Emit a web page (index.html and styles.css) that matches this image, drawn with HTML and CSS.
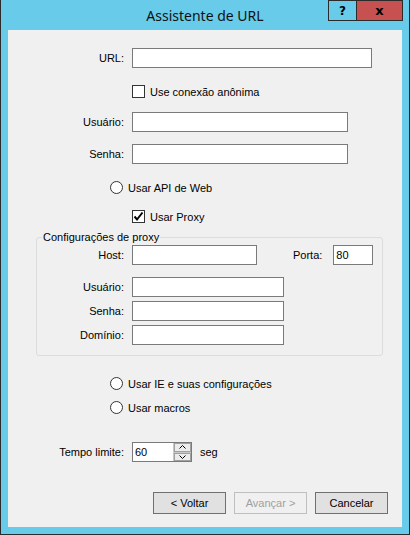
FILE: index.html
```html
<!DOCTYPE html>
<html lang="pt-BR">
<head>
  <meta charset="UTF-8" />
  <title>Assistente de URL</title>
  <link rel="stylesheet" href="styles.css">
</head>
<body>
  <div class="window">
    <div class="titlebar">
      <span></span>
      <span class="title">Assistente de URL</span>
      <div class="caption-btns">
        <span class="cap-btn help">?</span>
        <span class="cap-btn close">x</span>
      </div>
    </div>

    <div class="client">
      <div class="row row-url">
        <label class="lbl">URL:</label>
        <input type="text" class="txt w-url" />
      </div>

      <div class="opt row-anon">
        <span class="chk"></span>
        <span>Use conexão anônima</span>
      </div>

      <div class="row row-user">
        <label class="lbl">Usuário:</label>
        <input type="text" class="txt w-user" />
      </div>

      <div class="row row-pass">
        <label class="lbl">Senha:</label>
        <input type="text" class="txt w-user" />
      </div>

      <div class="opt radio-opt row-api">
        <span class="radio"></span>
        <span>Usar API de Web</span>
      </div>

      <div class="opt row-proxy">
        <span class="chk">
          <svg width="11" height="11" viewBox="0 0 11 11"><path d="M1.5 5.5 L4 8.5 L9.5 1.5" fill="none" stroke="#000" stroke-width="2"/></svg>
        </span>
        <span>Usar Proxy</span>
      </div>

      <fieldset class="group">
        <legend>Configurações de proxy</legend>

        <div class="row row-host">
          <label class="lbl lbl-in">Host:</label>
          <input type="text" class="txt w-host" />
          <label class="porta-lbl">Porta:</label>
          <input type="text" class="txt w-port" value="80" />
        </div>

        <div class="row row-puser">
          <label class="lbl lbl-in">Usuário:</label>
          <input type="text" class="txt w-puser" />
        </div>

        <div class="row row-tight">
          <label class="lbl lbl-in">Senha:</label>
          <input type="text" class="txt w-puser" />
        </div>

        <div class="row row-tight">
          <label class="lbl lbl-in">Domínio:</label>
          <input type="text" class="txt w-puser" />
        </div>
      </fieldset>

      <div class="opt radio-opt row-ie">
        <span class="radio"></span>
        <span>Usar IE e suas configurações</span>
      </div>

      <div class="opt radio-opt row-macros">
        <span class="radio"></span>
        <span>Usar macros</span>
      </div>

      <div class="row row-timeout">
        <label class="lbl">Tempo limite:</label>
        <div class="spin">
          <input type="text" class="spin-input" value="60" />
          <div class="spin-btns">
            <span class="spin-btn">
              <svg width="7" height="4" viewBox="0 0 7 4"><path d="M0.5 3.5 L3.5 0.5 L6.5 3.5" fill="none" stroke="#000" stroke-width="1"/></svg>
            </span>
            <span class="spin-btn">
              <svg width="7" height="4" viewBox="0 0 7 4"><path d="M0.5 0.5 L3.5 3.5 L6.5 0.5" fill="none" stroke="#000" stroke-width="1"/></svg>
            </span>
          </div>
        </div>
        <span class="unit">seg</span>
      </div>

      <div class="buttons">
        <button class="btn">&lt; Voltar</button>
        <button class="btn" disabled>Avançar &gt;</button>
        <button class="btn">Cancelar</button>
      </div>
    </div>
  </div>
</body>
</html>
```

FILE: styles.css
```css
body {
    margin: 0;
    font-family: "Liberation Sans", Arial, sans-serif;
    font-size: 11px;
    color: #000;
}

.window {
    width: 410px;
    height: 535px;
    box-sizing: border-box;
    background: #67cbe9;
    border: 1px solid #2b2b2b;
    border-top: 0;
    padding: 0 7px 7px;
    display: flex;
    flex-direction: column;
}

/* title bar */
.titlebar {
    height: 30px;
    margin: 0 -7px;
    display: grid;
    grid-template-columns: 1fr auto 1fr;
}

.title {
    align-self: center;
    font-family: "Noto Sans", sans-serif;
    font-size: 14px;
    color: #111;
}

.caption-btns {
    justify-self: end;
    align-self: start;
    margin-right: 6px;
    height: 21px;
    box-sizing: border-box;
    border: 1px solid #2b2b2b;
    display: flex;
}

.cap-btn {
    display: flex;
    align-items: center;
    justify-content: center;
    font-family: "DejaVu Sans", sans-serif;
    font-weight: bold;
    font-size: 12px;
}

.help {
    width: 27px;
    border-right: 1px solid #2b2b2b;
}

.close {
    width: 45px;
    background: #c75050;
    font-size: 13px;
}

/* client area */
.client {
    flex: 1;
    background: #f0f0f0;
    padding-top: 18px;
}

.row {
    display: flex;
    align-items: center;
}

.lbl {
    flex: none;
    width: 116px;
    margin-right: 8px;
    text-align: right;
}

.lbl-in {
    width: 87px;
}

.txt {
    flex: none;
    height: 20px;
    box-sizing: border-box;
    margin: 0;
    padding: 0 2px;
    border: 1px solid #7a7a7a;
    background: #fff;
    font: inherit;
    outline: none;
}

.w-url { width: 240px; }
.w-user { width: 216px; }
.w-host { width: 125px; }
.w-port { width: 40px; }
.w-puser { width: 152px; }

.opt {
    display: flex;
    align-items: center;
    height: 13px;
    padding-left: 124px;
}

.radio-opt {
    padding-left: 102px;
}

.chk,
.radio {
    flex: none;
    width: 13px;
    height: 13px;
    box-sizing: border-box;
    margin-right: 5px;
    border: 1px solid #333;
    background: #fff;
    display: flex;
    align-items: center;
    justify-content: center;
}

.radio {
    border-radius: 50%;
}

.row-anon { margin-top: 17px; }
.row-user { margin-top: 14px; }
.row-pass { margin-top: 12px; }
.row-api { margin-top: 17px; }
.row-proxy { margin-top: 16px; }

/* proxy group */
.group {
    margin: 8px 19px 0 28px;
    padding: 0 0 10px;
    border: 1px solid #dcdcdc;
    border-radius: 3px;
}

.group legend {
    margin-left: 5px;
    padding: 0 1px;
}

.row-host { margin-top: 2px; }

.porta-lbl {
    margin: 0 11px 0 36px;
}

.row-puser { margin-top: 12px; }
.row-tight { margin-top: 4px; }

.row-ie { margin-top: 21px; }
.row-macros { margin-top: 11px; }

/* timeout */
.row-timeout { margin-top: 28px; }

.spin {
    display: flex;
    width: 60px;
    height: 20px;
    box-sizing: border-box;
    border: 1px solid #7a7a7a;
    background: #fff;
}

.spin-input {
    width: 0;
    flex: 1;
    border: none;
    padding: 0 2px;
    margin: 0;
    font: inherit;
    outline: none;
}

.spin-btns {
    width: 17px;
    display: flex;
    flex-direction: column;
    gap: 1px;
    padding: 0 0 0 1px;
    background: #c8c8c8;
}

.spin-btn {
    flex: 1;
    display: flex;
    align-items: center;
    justify-content: center;
    background: #ececec;
    border: 1px solid #a0a0a0;
}

.unit {
    margin-left: 8px;
}

/* bottom buttons */
.buttons {
    display: flex;
    justify-content: flex-end;
    gap: 8px;
    padding-right: 14px;
    margin-top: 30px;
}

.btn {
    width: 73px;
    height: 22px;
    box-sizing: border-box;
    margin: 0;
    padding: 0;
    border: 1px solid #707070;
    background: #e1e1e1;
    font: inherit;
    color: #000;
}

.btn:disabled {
    border-color: #bfbfbf;
    background: #f0f0f0;
    color: #a0a0a0;
}
```
